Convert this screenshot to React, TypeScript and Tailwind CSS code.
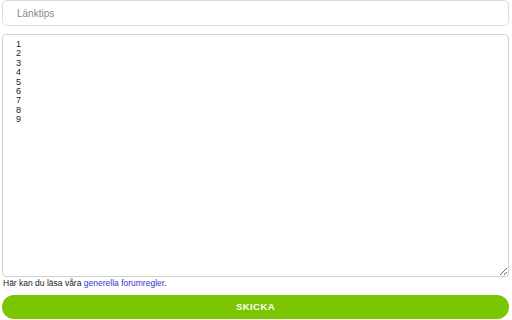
import React from 'react';

export default function App() {
  const lines = ['1', '2', '3', '4', '5', '6', '7', '8', '9'].join('\n');
  return (
    <div className="w-[512px] h-[320px] bg-white px-[2px] overflow-hidden font-['Liberation_Sans',Arial,sans-serif]">
      <input
        type="text"
        placeholder="Länktips"
        className="block w-[507px] h-[26px] rounded-[5px] border border-[#dcdcdc] px-[14px] text-[10px] text-[#333] placeholder:text-[#8a8a8a] outline-none"
      />
      <textarea
        defaultValue={lines}
        className="block mt-[8px] w-[507px] h-[243px] rounded-[4px] border border-[#d0d0d0] px-[13px] pt-[5px] text-[9px] leading-[9.4px] text-[#222] outline-none"
      />
      <p className="mt-[1px] pl-[1px] text-[8.5px] leading-[11px] text-[#222]">
        Här kan du läsa våra <a href="#" className="text-[#3333cc]">generella forumregler</a>.
      </p>
      <button className="mt-[6px] w-[507px] h-[24px] rounded-full bg-[#7ac600] text-white text-[9.5px] font-bold tracking-[0.4px] flex items-center justify-center">
        SKICKA
      </button>
    </div>
  );
}
